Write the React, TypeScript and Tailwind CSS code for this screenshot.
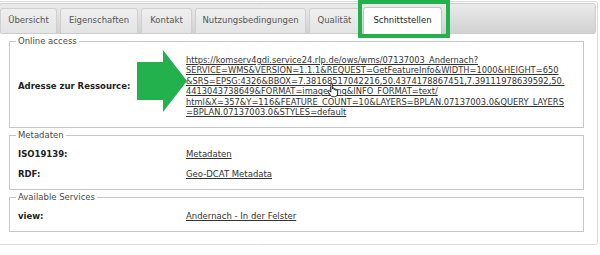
import React from "react";

const tabs = [
  { label: "Übersicht", w: "w-[57px]" },
  { label: "Eigenschaften", w: "w-[78px]" },
  { label: "Kontakt", w: "w-[51px]" },
  { label: "Nutzungsbedingungen", w: "w-[111px]" },
  { label: "Qualität", w: "w-[51px]" },
];

const urlLines = [
  "https://komserv4gdi.service24.rlp.de/ows/wms/07137003_Andernach?",
  "SERVICE=WMS&VERSION=1.1.1&REQUEST=GetFeatureInfo&WIDTH=1000&HEIGHT=650",
  "&SRS=EPSG:4326&BBOX=7.38168517042216,50.4374178867451,7.39111978639592,50.",
  "4413043738649&FORMAT=image/png&INFO_FORMAT=text/",
  "html&X=357&Y=116&FEATURE_COUNT=10&LAYERS=BPLAN.07137003.0&QUERY_LAYERS",
  "=BPLAN.07137003.0&STYLES=default",
];

function Fieldset({ legend, children, className = "" }: { legend: string; children: React.ReactNode; className?: string }) {
  return (
    <fieldset className={`w-[575px] border border-[#c6c6c6] pl-[6px] pr-[6px] pb-[5px] ${className}`}>
      <legend className="px-[2px] leading-[12px] text-[#4a4a4a]">{legend}</legend>
      <div className="pt-[3px] pl-[2px] flex flex-col">{children}</div>
    </fieldset>
  );
}

function Row({ label, children }: { label: string; children: React.ReactNode }) {
  return (
    <div className="flex items-center py-[5px]">
      <div className="w-[168px] shrink-0 font-bold text-[#222] leading-[10px]">{label}</div>
      <div className="flex-1 leading-[10px]">{children}</div>
    </div>
  );
}

export default function App() {
  return (
    <div className="relative w-[600px] h-[255px] bg-white overflow-hidden text-[8.5px] text-[#333] font-['DejaVu_Sans',Verdana,sans-serif]">
      <div className="-ml-[3px] mt-[1px] w-[601px] h-[244px] rounded-[3px] border border-[#dcdcdc] bg-white p-[1px]">
        <div className="h-[31px] rounded-[3px] border border-[#cdcdcd] bg-gradient-to-b from-[#ebebeb] to-[#d1d1d1] flex items-end gap-[3px]">
          {tabs.map((t) => (
            <div
              key={t.label}
              className={`${t.w} h-[25px] rounded-t-[3px] border border-b-0 border-[#d0d0d0] bg-gradient-to-b from-[#efefef] to-[#e3e3e3] flex items-center justify-center text-[#555] leading-none pb-[1px]`}
            >
              {t.label}
            </div>
          ))}
          <div className="w-[79px] h-[27px] -mb-[1px] rounded-t-[3px] border border-b-0 border-[#c4c4c4] bg-white flex items-center justify-center text-[#262626] leading-none pb-[2px]">
            Schnittstellen
          </div>
        </div>
        <div className="pl-[10px] pt-[1px] flex flex-col gap-[1px]">
          <Fieldset legend="Online access">
            <Row label="Adresse zur Ressource:">
              <div className="flex flex-col text-[8.3px] leading-[10.4px]">
                {urlLines.map((l) => (
                  <span key={l} className="underline underline-offset-[1px] whitespace-nowrap">
                    {l}
                  </span>
                ))}
              </div>
            </Row>
          </Fieldset>
          <Fieldset legend="Metadaten">
            <Row label="ISO19139:">
              <span className="underline underline-offset-[1px]">Metadaten</span>
            </Row>
            <Row label="RDF:">
              <span className="underline underline-offset-[1px]">Geo-DCAT Metadata</span>
            </Row>
          </Fieldset>
          <Fieldset legend="Available Services">
            <Row label="view:">
              <span className="underline underline-offset-[1px]">Andernach - In der Felster</span>
            </Row>
          </Fieldset>
        </div>
      </div>

      {/* green highlight box around active tab */}
      <div className="absolute left-[358px] top-0 w-[92px] h-[38px] border-[4px] border-[#22b14c]" />

      {/* green arrow */}
      <svg className="absolute left-[136px] top-[49px]" width="52" height="65" viewBox="0 0 52 65">
        <polygon points="1,13 27,13 27,1 51,32 27,63 27,51 1,51" fill="#22b14c" />
      </svg>

      {/* hand cursor */}
      <svg className="absolute left-[327px] top-[83px]" width="12" height="15" viewBox="0 0 14 18">
        <path
          d="M4.5 1.5a1 1 0 0 1 2 0V7a1 1 0 0 1 2 0v1a1 1 0 0 1 2 0v1a1 1 0 0 1 2 0v4c0 2-1.5 3.5-3.5 3.5H7c-1.5 0-2.5-.8-3.300-2L1.2 10.5a1 1 0 0 1 1.6-1.2L4.5 11z"
          fill="#fff"
          stroke="#000"
          strokeWidth="1"
          strokeLinejoin="round"
        />
      </svg>
    </div>
  );
}
